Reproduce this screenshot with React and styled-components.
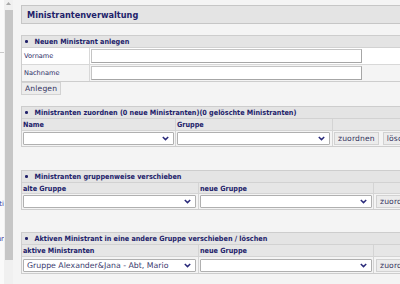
import React from "react";
import styled, { createGlobalStyle } from "styled-components";

const Global = createGlobalStyle`
  html, body { margin: 0; padding: 0; overflow: hidden; background: #f4f4f4; }
  * { box-sizing: border-box; }
`;

const NAVY = "#22226a";
const FONT = `"DejaVu Sans Condensed", "DejaVu Sans", Verdana, sans-serif`;

const Page = styled.div`
  display: flex;
  width: 400px;
  height: 284px;
  overflow: hidden;
  background: #f4f4f4;
  font-family: ${FONT};
`;

const LeftPanel = styled.div`
  flex: none;
  width: 4px;
  background: #fafafa;
  display: flex;
  flex-direction: column;
  align-items: flex-end;
  overflow: hidden;
`;

const PanelRule = styled.div`
  margin-top: 52px;
  width: 100%;
  height: 1px;
  background: #c8c8c8;
`;

const PanelText = styled.div`
  margin-top: ${(p) => p.$mt}px;
  font-size: 7px;
  line-height: 8px;
  color: #3838a0;
  white-space: nowrap;
  font-family: "DejaVu Sans", sans-serif;
`;

const ScrollTrack = styled.div`
  flex: none;
  width: 9px;
  background: #f0f0f0;
  display: flex;
  flex-direction: column;
  align-items: flex-end;
`;

const ScrollArrow = styled.svg`
  display: block;
  margin: 2px 0 0 0;
  align-self: center;
`;

const ScrollThumb = styled.div`
  margin-top: 5px;
  width: 8px;
  height: 250px;
  background: #c6c6c6;
`;

const Main = styled.div`
  flex: none;
  width: 520px;
  padding: 5px 0 0 8px;
  display: flex;
  flex-direction: column;
  align-items: flex-start;
`;

const Title = styled.div`
  width: 100%;
  height: 19px;
  border: 1px solid #c6c6c6;
  background: #e4e4e4;
  display: flex;
  align-items: center;
  padding-left: 5px;
  font-weight: bold;
  font-size: 9.1px;
  color: ${NAVY};
`;

const Box = styled.div`
  width: 100%;
  margin-top: ${(p) => p.$mt}px;
  border: 1px solid #cdcdcd;
  background: #f4f4f4;
`;

const Head = styled.div`
  height: ${(p) => p.$h || 12}px;
  background: #e4e4e4;
  border-bottom: 1px solid #d2d2d2;
  display: flex;
  align-items: center;
  padding-left: 3px;
  font-weight: bold;
  font-size: 7.2px;
  color: ${NAVY};
  white-space: nowrap;
`;

const Bullet = styled.span`
  display: inline-block;
  flex: none;
  width: 2.5px;
  height: 2.5px;
  border-radius: 50%;
  background: ${NAVY};
  margin: 0 7px 0 0;
`;

const FormRow = styled.div`
  display: grid;
  grid-template-columns: 68px 1fr;
  height: ${(p) => p.$h}px;
  background: ${(p) => p.$bg};
  border-bottom: ${(p) => (p.$last ? "none" : "1px solid #d8d8d8")};
`;

const LabelCell = styled.div`
  border-right: 1px solid #d8d8d8;
  display: flex;
  align-items: center;
  padding-left: 2px;
  font-size: 6.6px;
  color: #2a2a66;
  font-family: "DejaVu Sans", sans-serif;
`;

const InputCell = styled.div`
  display: flex;
  align-items: center;
  padding-left: 1px;
`;

const TextInput = styled.input`
  width: 271px;
  height: 14px;
  border: 1px solid #c4c4c4;
  border-right-color: #a6a6a6;
  border-bottom-color: #a6a6a6;
  background: #fff;
  padding: 0;
  margin: 0;
`;

const Button = styled.button`
  flex: none;
  height: 13px;
  margin: 0 0 0 ${(p) => p.$ml || 0}px;
  padding: 0 3px;
  border: 1px solid #d2d2d2;
  background: #ececec;
  font-family: "DejaVu Sans", sans-serif;
  font-size: 7.6px;
  line-height: 11px;
  color: #33335e;
  letter-spacing: 0.15px;
`;

const Grid = styled.div`
  display: grid;
  grid-template-columns: ${(p) => p.$cols};
  height: ${(p) => p.$h}px;
  border-bottom: ${(p) => (p.$last ? "none" : "1px solid #d4d4d4")};
  background: ${(p) => (p.$head ? "#e6e6e6" : "#f4f4f4")};
`;

const Cell = styled.div`
  border-right: ${(p) => (p.$last ? "none" : "1px solid #d4d4d4")};
  display: flex;
  align-items: center;
  padding: 0 ${(p) => p.$pr || 1}px 0 ${(p) => p.$pl || 1}px;
  font-weight: ${(p) => (p.$bold ? "bold" : "normal")};
  font-size: 7.2px;
  color: ${NAVY};
  white-space: nowrap;
  overflow: hidden;
`;

const SelectBox = styled.div`
  flex: 1;
  height: 13px;
  display: flex;
  align-items: center;
  background: #fff;
  border: 1px solid #b0b0b0;
  border-radius: 1px;
`;

const NativeSelect = styled.select`
  flex: 1;
  min-width: 0;
  height: 100%;
  appearance: none;
  -webkit-appearance: none;
  border: none;
  outline: none;
  background: transparent;
  padding: 0 0 0 3px;
  margin: 0;
  font-family: "DejaVu Sans", sans-serif;
  font-size: 7.8px;
  color: #3a3a6e;
`;

const Chevron = styled.svg`
  flex: none;
  display: block;
  margin-right: 4px;
`;

function Select({ value }) {
  return (
    <SelectBox>
      <NativeSelect defaultValue={value || ""}>
        <option value={value || ""}>{value || ""}</option>
      </NativeSelect>
      <Chevron width="7" height="5" viewBox="0 0 7 5">
        <path d="M0.8 1 L3.5 3.6 L6.2 1" fill="none" stroke="#2a2a7a" strokeWidth="1.5" />
      </Chevron>
    </SelectBox>
  );
}

const COLS2 = "154px 157px 1fr";
const COLS3 = "177px 175px 1fr";

export default function App() {
  return (
    <>
      <Global />
      <Page>
        <LeftPanel>
          <PanelRule />
          <PanelText $mt={147}>Liti</PanelText>
          <PanelText $mt={27}>Filur</PanelText>
        </LeftPanel>
        <ScrollTrack>
          <ScrollArrow width="5" height="3" viewBox="0 0 5 3">
            <path d="M0 3 L2.5 0 L5 3 Z" fill="#a8a8a8" />
          </ScrollArrow>
          <ScrollThumb />
        </ScrollTrack>
        <Main>
          <Title>Ministrantenverwaltung</Title>

          <Box $mt={11}>
            <Head>
              <Bullet />
              Neuen Ministrant anlegen
            </Head>
            <FormRow $h={17} $bg="#ffffff">
              <LabelCell>Vorname</LabelCell>
              <InputCell>
                <TextInput type="text" />
              </InputCell>
            </FormRow>
            <FormRow $h={16} $bg="#f4f4f4" $last>
              <LabelCell>Nachname</LabelCell>
              <InputCell>
                <TextInput type="text" />
              </InputCell>
            </FormRow>
          </Box>
          <Button>Anlegen</Button>

          <Box $mt={11}>
            <Head>
              <Bullet />
              Ministranten zuordnen (0 neue Ministranten)(0 gelöschte Ministranten)
            </Head>
            <Grid $cols={COLS2} $h={12} $head>
              <Cell $bold>Name</Cell>
              <Cell $bold>Gruppe</Cell>
              <Cell $last />
            </Grid>
            <Grid $cols={COLS2} $h={15} $last>
              <Cell>
                <Select />
              </Cell>
              <Cell $pr={2}>
                <Select />
              </Cell>
              <Cell $last>
                <Button>zuordnen</Button>
                <Button $ml={4}>löschen</Button>
              </Cell>
            </Grid>
          </Box>

          <Box $mt={23}>
            <Head>
              <Bullet />
              Ministranten gruppenweise verschieben
            </Head>
            <Grid $cols={COLS3} $h={11} $head>
              <Cell $bold>alte Gruppe</Cell>
              <Cell $bold>neue Gruppe</Cell>
              <Cell $last />
            </Grid>
            <Grid $cols={COLS3} $h={15} $last>
              <Cell $pr={2}>
                <Select />
              </Cell>
              <Cell>
                <Select />
              </Cell>
              <Cell $last $pl={2}>
                <Button>zuordnen</Button>
              </Cell>
            </Grid>
          </Box>

          <Box $mt={22}>
            <Head>
              <Bullet />
              Aktiven Ministrant in eine andere Gruppe verschieben / löschen
            </Head>
            <Grid $cols={COLS3} $h={12} $head>
              <Cell $bold>aktive Ministranten</Cell>
              <Cell $bold>neue Gruppe</Cell>
              <Cell $last />
            </Grid>
            <Grid $cols={COLS3} $h={16} $last>
              <Cell $pr={2}>
                <Select value="Gruppe Alexander&Jana - Abt, Mario" />
              </Cell>
              <Cell>
                <Select />
              </Cell>
              <Cell $last $pl={2}>
                <Button>zuordnen</Button>
              </Cell>
            </Grid>
          </Box>
        </Main>
      </Page>
    </>
  );
}
